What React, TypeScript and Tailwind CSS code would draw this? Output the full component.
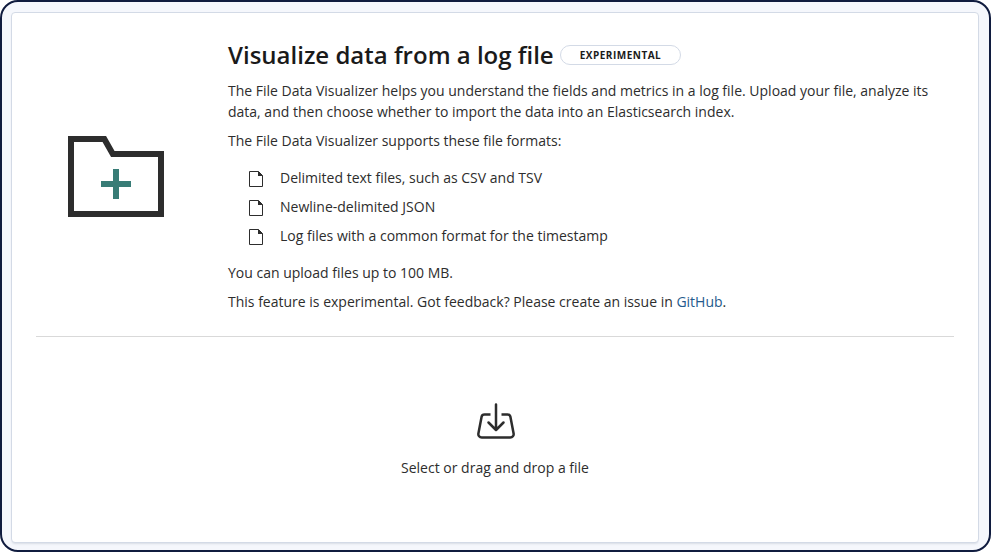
import { useState } from 'react'

const FORMATS = [
  'Delimited text files, such as CSV and TSV',
  'Newline-delimited JSON',
  'Log files with a common format for the timestamp',
]

function FolderIcon() {
  return (
    <svg width="96" height="96" viewBox="0 0 96 96" fill="none" aria-hidden="true">
      <path d="M3 12h33.300l8.500 15H93v60H3z" stroke="#2d2d2d" strokeWidth="6" />
      <path d="M48 42v30M33 57h30" stroke="#387c76" strokeWidth="6" />
    </svg>
  )
}

function DocumentIcon() {
  return (
    <svg width="16" height="18" viewBox="0 0 16 18" fill="none" aria-hidden="true">
      <path d="M1.500 2.500h9l4 4v11h-13z" stroke="#2d2d2d" strokeLinejoin="round" />
      <path d="M10 2l5 5h-5z" fill="#2d2d2d" />
    </svg>
  )
}

function ImportIcon() {
  return (
    <svg
      width="40"
      height="40"
      viewBox="-1 0 40 40"
      fill="none"
      stroke="#2d2d2d"
      strokeWidth="2.500"
      strokeLinecap="round"
      strokeLinejoin="round"
      aria-hidden="true"
    >
      <path d="M14.500 13.500H8.500c-1.500 0-2.600.9-2.900 2.300L2.400 32.500c-.4 2.200 1.100 4 3.300 4h28.600c2.200 0 3.700-1.800 3.300-4l-3.200-16.700c-.3-1.400-1.400-2.300-2.900-2.300h-6" strokeLinecap="butt" />
      <path d="M20 3.500v25M12.500 21.500l7.500 7.500 7.500-7.500" />
    </svg>
  )
}

export default function App() {
  const [fileName, setFileName] = useState<string | null>(null)

  return (
    <div className="bg-white font-['Open_Sans',sans-serif] text-sm leading-[21px] text-[#2d2d2d]">
      <main className="flex min-h-screen flex-col rounded-[18px] border-2 border-[#101c3f] bg-[#f5f7fc] pt-[10px] pr-[10px] pb-[7px] pl-[9px]">
        <div className="flex flex-1 flex-col rounded border border-[#d3dae6] bg-white p-6 shadow-[0_2px_2px_-1px_rgba(152,162,179,0.3)]">
          {/* About */}
          <section className="flex items-center gap-8 border-b border-[#d9d9d9] pb-6">
            <div className="flex w-40 shrink-0 justify-center">
              <FolderIcon />
            </div>
            <div className="min-w-0 flex-1 space-y-2">
              <div className="flex items-center gap-1.5">
                <h1 className="text-2xl leading-[35px] font-semibold text-[#1a1a1a]">
                  Visualize data from a log file
                </h1>
                <span className="rounded-full border border-[#d3dae6] px-[19px] text-[10px] leading-[18px] font-bold tracking-wider text-[#1a1a1a] uppercase">
                  Experimental
                </span>
              </div>
              <p>
                The File Data Visualizer helps you understand the fields and metrics in a log file.
                Upload your file, analyze its data, and then choose whether to import the data into an
                Elasticsearch index.
              </p>
              <p>The File Data Visualizer supports these file formats:</p>
              <ul className="space-y-2 py-2 pl-5">
                {FORMATS.map((format) => (
                  <li key={format} className="flex items-center gap-4">
                    <DocumentIcon />
                    <span>{format}</span>
                  </li>
                ))}
              </ul>
              <p>You can upload files up to 100 MB.</p>
              <p>
                This feature is experimental. Got feedback? Please create an issue in{' '}
                <a href="#github" className="text-[#245a8d] hover:underline">
                  GitHub
                </a>
                .
              </p>
            </div>
          </section>

          {/* File picker */}
          <label
            htmlFor="file"
            className="relative flex flex-1 cursor-pointer flex-col items-center justify-center gap-4 pt-6"
          >
            <input
              id="file"
              type="file"
              className="sr-only"
              onChange={(e) => setFileName(e.target.files?.[0]?.name ?? null)}
            />
            <ImportIcon />
            <span>{fileName ?? 'Select or drag and drop a file'}</span>
          </label>
        </div>
      </main>
    </div>
  )
}
